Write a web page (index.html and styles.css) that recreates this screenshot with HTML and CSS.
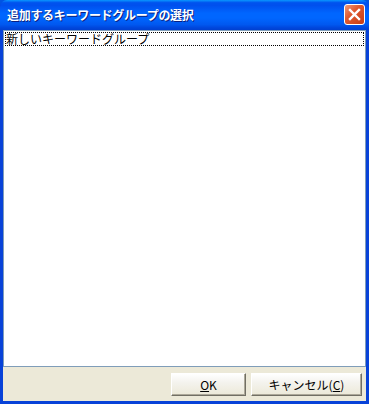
FILE: index.html
```html
<!DOCTYPE html>
<html lang="ja">
<head>
    <meta charset="UTF-8">
    <title>追加するキーワードグループの選択</title>
    <link rel="stylesheet" href="styles.css">
</head>
<body>
    <div class="window">
        <div class="title-bar">
            <span class="title-text">追加するキーワードグループの選択</span>
            <button class="close-btn" aria-label="閉じる">
                <svg width="13" height="13" viewBox="0 0 13 13">
                    <path d="M2 2 L11 11 M11 2 L2 11" stroke="#fff" stroke-width="2.4" stroke-linecap="square"/>
                </svg>
            </button>
        </div>

        <div class="client">
            <div class="list-box">
                <div class="list-item focused">新しいキーワードグループ</div>
            </div>

            <div class="button-row">
                <button class="dlg-btn ok-btn"><u>O</u>K</button>
                <button class="dlg-btn cancel-btn">キャンセル(<u>C</u>)</button>
            </div>
        </div>
    </div>
</body>
</html>
```

FILE: styles.css
```css
:root {
    --xp-blue: #0054e3;
    --xp-face: #ece9d8;
    --text-color: #000;
}

* {
    box-sizing: border-box;
    margin: 0;
    padding: 0;
}

body {
    font-family: "Noto Sans CJK JP", "DejaVu Sans", sans-serif;
    font-size: 12px;
    color: var(--text-color);
    background-color: var(--xp-blue);
}

.window {
    width: 369px;
    height: 404px;
    display: flex;
    flex-direction: column;
    background-color: #0842d8;
    border-radius: 7px 7px 0 0;
    overflow: hidden;
}

.title-bar {
    height: 30px;
    flex-shrink: 0;
    display: flex;
    align-items: center;
    justify-content: space-between;
    padding: 0 4px 0 7px;
    background: linear-gradient(to bottom, #0997ff 0%, #0053ee 9%, #0050ee 18%, #06f 44%, #06f 60%, #0058f0 82%, #0047dd 92%, #0040d0 100%);
}

.title-text {
    color: white;
    font-weight: bold;
    font-size: 12px;
    letter-spacing: -0.3px;
    text-shadow: 1px 1px 0 #0a1f80;
    padding-bottom: 1px;
}

.close-btn {
    width: 21px;
    height: 21px;
    display: flex;
    align-items: center;
    justify-content: center;
    border: 1px solid white;
    border-radius: 3px;
    background: linear-gradient(135deg, #f09a7a 0%, #e05a30 40%, #c73c12 100%);
    margin-bottom: 1px;
}

.client {
    flex-grow: 1;
    display: flex;
    flex-direction: column;
    margin: 0 3px 3px 3px;
    background-color: var(--xp-face);
}

.list-box {
    flex-grow: 1;
    background-color: white;
    border: 1px solid #7f9db9;
    padding: 1px;
}

.list-item {
    height: 14px;
    line-height: 13px;
    padding-left: 1px;
    font-size: 12px;
    white-space: nowrap;
}

.list-item.focused {
    outline: 1px dotted #000;
    outline-offset: -1px;
}

.button-row {
    height: 34px;
    flex-shrink: 0;
    display: flex;
    justify-content: flex-end;
    align-items: center;
    gap: 5px;
    padding: 1px 4px 0 0;
}

.dlg-btn {
    height: 23px;
    font-family: "Noto Sans CJK JP", "DejaVu Sans", sans-serif;
    font-size: 12px;
    color: #000;
    background: linear-gradient(to bottom, #fff 0%, #f4f3ee 40%, #ece9d8 100%);
    border: 1px solid #fff;
    border-right-color: #716f64;
    border-bottom-color: #716f64;
    box-shadow: inset -1px -1px 0 #aca899;
}

.ok-btn {
    width: 75px;
}

.cancel-btn {
    width: 111px;
}
```
